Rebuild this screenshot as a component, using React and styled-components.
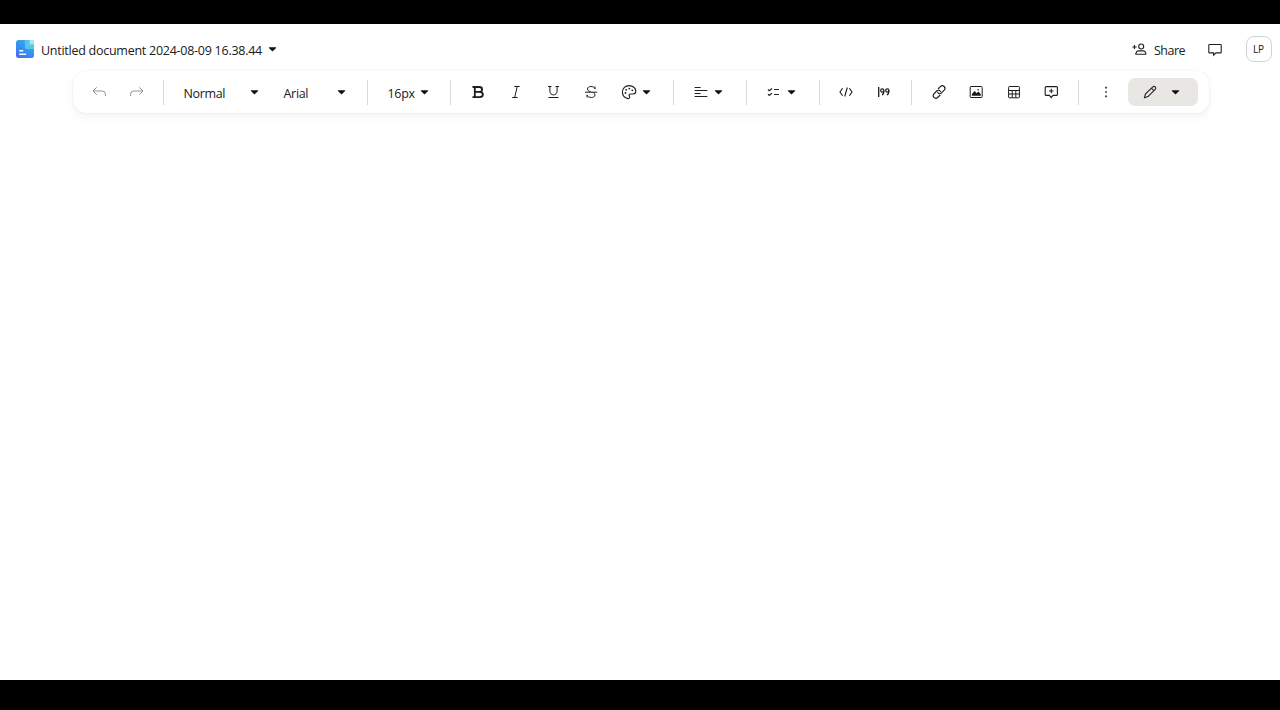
import React from 'react';
import styled, { createGlobalStyle } from 'styled-components';

const GlobalStyle = createGlobalStyle`
  * { box-sizing: border-box; }
  body { margin: 0; background: #000; overflow: hidden; }
`;

const Screen = styled.div`
  height: 710px;
  padding: 24px 0 30px;
  background: #000;
  font-family: 'Open Sans', 'Noto Sans', sans-serif;
  font-size: 12.5px;
  color: #202020;
`;

const Page = styled.main`
  height: 656px;
  background: #fff;
`;

const Header = styled.header`
  display: flex;
  align-items: center;
  height: 47px;
  padding: 4px 9px 0 16px;
`;

const Title = styled.span`
  width: 221px;
  margin: 1px 6px 0 7px;
  white-space: nowrap;
  letter-spacing: -0.26px;
`;

const Actions = styled.div`
  display: flex;
  align-items: center;
  margin-left: auto;
`;

const ShareButton = styled.div`
  display: flex;
  align-items: center;
  gap: 6px;
  width: 54px;
  margin-right: 21px;
`;

const ShareLabel = styled.span`
  padding-top: 1px;
  letter-spacing: -0.5px;
`;

const Avatar = styled.div`
  display: flex;
  align-items: center;
  justify-content: center;
  width: 26px;
  height: 26px;
  margin: 0 -0.5px 1px 22.5px;
  border: 1px solid #d2d2d2;
  border-radius: 8px;
  font-size: 10px;
`;

const Toolbar = styled.nav`
  display: flex;
  align-items: center;
  width: 1136px;
  height: 42px;
  margin-left: 72.5px;
  padding-left: 7.7px;
  border-radius: 13px;
  background: #fff;
  box-shadow: 0 0 2px rgba(0, 0, 0, 0.08), 0 4px 10px rgba(0, 0, 0, 0.05);
`;

const IconButton = styled.div`
  display: flex;
  flex: none;
  align-items: center;
  justify-content: center;
  width: 37.6px;
  height: 28px;
  color: ${(p) => (p.$disabled ? '#939393' : '#1c1c1c')};
`;

const SplitButton = styled.div`
  display: flex;
  flex: none;
  align-items: center;
  gap: 5px;
  width: 55.6px;
  height: 28px;
  padding-left: 10.8px;
`;

const Select = styled.div`
  display: flex;
  flex: none;
  align-items: center;
  justify-content: space-between;
  width: ${(p) => p.$width}px;
  height: 28px;
  padding: 0 13.1px 0 11.2px;
`;

const SelectLabel = styled.span`
  padding-top: 2px;
  letter-spacing: -0.35px;
`;

const Divider = styled.i`
  flex: none;
  width: 1px;
  height: 25px;
  margin: 0 8px;
  background: #d8d8d8;
`;

const ModeButton = styled.div`
  display: flex;
  align-items: center;
  gap: 13px;
  width: 70px;
  height: 28px;
  margin-left: 3px;
  padding-left: 14px;
  border-radius: 7px;
  background: #e8e7e3;
`;

const Glyph = styled.svg`
  display: block;
  flex: none;
  fill: none;
  stroke: currentColor;
  stroke-width: ${(p) => p.$weight || 1};
  stroke-linecap: butt;
  stroke-linejoin: miter;
`;

const LogoMark = styled(Glyph)`
  margin-bottom: 1px;
`;

const Icon = ({ children, weight }) => (
  <Glyph width="16" height="16" viewBox="0 0 16 16" $weight={weight}>{children}</Glyph>
);

const Caret = () => (
  <Glyph width="9" height="5" viewBox="0 0 9 5"><path d="M.9.3h7.2v.8L4.5 4.6.9 1.1z" fill="#111" stroke="none" /></Glyph>
);

const Logo = () => (
  <LogoMark width="18" height="18" viewBox="0 0 18 18">
    <defs>
      <linearGradient id="logo" x1="0" y1="1" x2=".65" y2="0">
        <stop offset="0" stopColor="#5563ef" />
        <stop offset=".5" stopColor="#348ff3" />
        <stop offset="1" stopColor="#36aeea" />
      </linearGradient>
    </defs>
    <rect width="18" height="18" rx="2.8" fill="url(#logo)" stroke="none" />
    <path d="M9 0h4.5v4.5H18V9h-7.5Q9 9 9 7.5z" fill="#57c5ee" stroke="none" />
    <path d="M13.5 0H16a2 2 0 0 1 2 2v2.5h-4.5z" fill="#a9e5f5" stroke="none" />
    <path d="M3.2 10.7h4M3.2 14.2h7" stroke="#fff" strokeWidth="1.5" />
  </LogoMark>
);

const Undo = () => <Icon><path d="M5.7 3.3 2 7l3.7 3.7M2 7h9.2q3.2 0 3.2 3.2V12" /></Icon>;
const Redo = () => <Icon><path d="M10.3 3.3 14 7l-3.7 3.7M14 7H4.8Q1.6 7 1.6 10.2V12" /></Icon>;
const Bold = () => <Icon weight={1.8}><path d="M2.5 3h6.8c3.7 0 3.7 4.8 0 4.8H5M9.3 7.8c4.8 0 4.8 5.4 0 5.4H2.5M4.8 3v10" /></Icon>;
const Italic = () => <Icon><path d="M6.3 2.5h5.4M4.2 13.5h5.4M9.2 2.5l-2.5 11" /></Icon>;
const Underline = () => <Icon><path d="M3 2.5h3.5M10.5 2.5H14M4.9 2.5V7c0 5.2 7.2 5.2 7.2 0V2.5M3.5 13.5h10" /></Icon>;
const Strike = () => <Icon><path d="M12 5.2V2.5M12 4.8C11 1.7 4.5 1.7 4.5 5c0 1.5 1 2.2 3.3 2.7M4 10.8v2.8M4 11c1 3.2 8 3.4 8 0 0-1.3-.7-2-1.8-2.5M2 8.2h12.2" /></Icon>;
const Palette = () => (
  <Icon weight={1.1}>
    <path d="M7.2 14.6C3 13.6 1.4 11 1.4 8c0-3.8 3-6.4 6.7-6.4 3.8 0 6.7 2.5 6.7 5.7 0 1.9-1.1 2.7-2.8 2.7H9.7c-1.6 0-2 .9-1.3 2 .6 1.2.2 2.8-1.2 2.6z" />
    <g fill="currentColor" stroke="none"><circle cx="4.5" cy="9" r=".9" /><circle cx="5.2" cy="5.8" r=".9" /><circle cx="8.3" cy="4.6" r=".9" /><circle cx="11.3" cy="6.3" r=".9" /></g>
  </Icon>
);
const Align = () => <Icon><path d="M1.6 3.5h6M1.6 6.5h12.8M1.6 9.5h6M1.6 12.5h12.8" /></Icon>;
const Checklist = () => <Icon weight={1.2}><path d="m2 5.5 1.3 1.3L6 4.5M2 10.1l1.3 1.3L6 9.1M8 5.5h5M8 10.5h5" /></Icon>;
const Code = () => <Icon weight={1.1}><path d="M4.6 4.2 2 8l2.6 3.8M11.4 4.2 14 8l-2.6 3.8M9.3 3.5l-2.6 9" /></Icon>;
const Quote = () => (
  <Icon>
    <path d="M2.7 3v10" strokeWidth="1.3" />
    <circle cx="6.3" cy="6.5" r="1.6" strokeWidth="1.2" /><circle cx="11.3" cy="6.5" r="1.6" strokeWidth="1.2" />
    <path d="M7.9 6.5c0 2.7-.5 4-2 4.5M12.9 6.5c0 2.7-.5 4-2 4.5" strokeWidth="1.2" />
  </Icon>
);
const Link = () => <Icon weight={1.1}><path d="m7 5 2.4-2.4c2.5-2.4 6.2.9 3.8 3.6l-2.7 2.7C9 10.4 7 9.8 6.5 7.9M9.2 11l-2.5 2.5c-2.6 2.3-6-1.2-3.8-3.7L5.6 7C7.1 5.6 9.1 6.2 9.6 8.1" /></Icon>;
const Picture = () => (
  <Icon>
    <rect x="2.2" y="2.5" width="12" height="11" rx=".8" />
    <path d="M3.9 11.7V10l2.7-3 2.1 2.2 1.7-1.7 2.4 2.8v1.4z" fill="currentColor" stroke="none" /><circle cx="10.1" cy="5.8" r=".8" fill="currentColor" stroke="none" />
  </Icon>
);
const Table = () => <Icon><rect x="2.6" y="2.5" width="10.8" height="11.3" rx=".8" /><path d="M2.6 6.5h10.8M2.6 10h10.8M6.2 6.5v7M9.8 6.5v7" /></Icon>;
const AddComment = () => <Icon weight={1.1}><path d="M3.2 2.6h10.2q1 0 1 1v6.8q0 1-1 1H10l-1.8 2.3-1.8-2.3H3.2q-1 0-1-1V3.6q0-1 1-1zM8.3 4.8v4.4M6.1 7h4.4" /></Icon>;
const Comment = () => <Icon weight={1.1}><path d="M2.5 2.5h11q.7 0 .7.7v7q0 .7-.7.7H9l-2.4 2.3v-2.3H2.5q-.7 0-.7-.7v-7q0-.7.7-.7z" /></Icon>;
const More = () => <Icon><path d="M8 2.8v1.6M8 7.2v1.6M8 11.6v1.6" strokeWidth="1.6" /></Icon>;
const Pencil = () => <Icon weight={1.1}><path d="m2.5 13.7.9-3.6 7.4-7.2q1.3-1.1 2.4 0t0 2.4l-7.2 7.3zM9.4 4.2l2.5 2.5" /></Icon>;
const AddPerson = () => <Icon weight={1.1}><circle cx="9.2" cy="4.5" r="2.5" /><path d="M4.2 12.3q-.7 0-.4-.8.9-2.6 2.4-2.6h5.4q1.5 0 2.3 2.6.3.8-.4.8zM.4 5h4.2M2.5 2.9v4.2" /></Icon>;

export default function App() {
  return (
    <>
      <GlobalStyle />
      <Screen>
        <Page>
          <Header>
            <Logo />
            <Title>Untitled document 2024-08-09 16.38.44</Title>
            <Caret />
            <Actions>
              <ShareButton><AddPerson /><ShareLabel>Share</ShareLabel></ShareButton>
              <Comment />
              <Avatar>LP</Avatar>
            </Actions>
          </Header>
          <Toolbar>
            <IconButton $disabled><Undo /></IconButton>
            <IconButton $disabled><Redo /></IconButton>
            <Divider />
            <Select $width={100}><SelectLabel>Normal</SelectLabel><Caret /></Select>
            <Select $width={87}><SelectLabel>Arial</SelectLabel><Caret /></Select>
            <Divider />
            <Select $width={66}><SelectLabel>16px</SelectLabel><Caret /></Select>
            <Divider />
            <IconButton><Bold /></IconButton>
            <IconButton><Italic /></IconButton>
            <IconButton><Underline /></IconButton>
            <IconButton><Strike /></IconButton>
            <SplitButton><Palette /><Caret /></SplitButton>
            <Divider />
            <SplitButton><Align /><Caret /></SplitButton>
            <Divider />
            <SplitButton><Checklist /><Caret /></SplitButton>
            <Divider />
            <IconButton><Code /></IconButton>
            <IconButton><Quote /></IconButton>
            <Divider />
            <IconButton><Link /></IconButton>
            <IconButton><Picture /></IconButton>
            <IconButton><Table /></IconButton>
            <IconButton><AddComment /></IconButton>
            <Divider />
            <IconButton><More /></IconButton>
            <ModeButton><Pencil /><Caret /></ModeButton>
          </Toolbar>
        </Page>
      </Screen>
    </>
  );
}
